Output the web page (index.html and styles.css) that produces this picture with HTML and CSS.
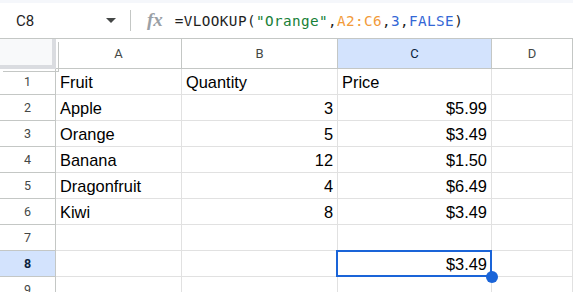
FILE: index.html
```html
<!DOCTYPE html>
<html lang="en">
<head>
    <meta charset="UTF-8">
    <title>Sheet</title>
    <link rel="stylesheet" href="styles.css">
</head>
<body>

<!-- Barra della formula -->
<div class="formula-bar">
    <div class="name-box">
        <span class="cell-ref">C8</span>
        <span class="caret"></span>
    </div>
    <div class="divider"></div>
    <span class="fx">fx</span>
    <div class="formula"><span class="tx">=VLOOKUP(</span><span class="str">"Orange"</span><span class="tx">,</span><span class="rng">A2:C6</span><span class="tx">,</span><span class="num">3</span><span class="tx">,</span><span class="kw">FALSE</span><span class="tx">)</span></div>
</div>

<!-- Griglia -->
<div class="grid">
    <div class="corner"></div>
    <div class="col-head">A</div>
    <div class="col-head">B</div>
    <div class="col-head active">C</div>
    <div class="col-head">D</div>

    <div class="row-head">1</div>
    <div class="cell">Fruit</div>
    <div class="cell">Quantity</div>
    <div class="cell">Price</div>
    <div class="cell"></div>

    <div class="row-head">2</div>
    <div class="cell">Apple</div>
    <div class="cell right">3</div>
    <div class="cell right">$5.99</div>
    <div class="cell"></div>

    <div class="row-head">3</div>
    <div class="cell">Orange</div>
    <div class="cell right">5</div>
    <div class="cell right">$3.49</div>
    <div class="cell"></div>

    <div class="row-head">4</div>
    <div class="cell">Banana</div>
    <div class="cell right">12</div>
    <div class="cell right">$1.50</div>
    <div class="cell"></div>

    <div class="row-head">5</div>
    <div class="cell">Dragonfruit</div>
    <div class="cell right">4</div>
    <div class="cell right">$6.49</div>
    <div class="cell"></div>

    <div class="row-head">6</div>
    <div class="cell">Kiwi</div>
    <div class="cell right">8</div>
    <div class="cell right">$3.49</div>
    <div class="cell"></div>

    <div class="row-head">7</div>
    <div class="cell"></div>
    <div class="cell"></div>
    <div class="cell"></div>
    <div class="cell"></div>

    <div class="row-head active">8</div>
    <div class="cell"></div>
    <div class="cell"></div>
    <div class="cell right selected">$3.49<span class="handle"></span></div>
    <div class="cell"></div>

    <div class="row-head">9</div>
    <div class="cell"></div>
    <div class="cell"></div>
    <div class="cell"></div>
    <div class="cell"></div>
</div>

</body>
</html>
```

FILE: styles.css
```css
    * {
        box-sizing: border-box;
    }
    body {
        margin: 0;
        background-color: #fff;
        font-family: "Liberation Sans", Arial, sans-serif;
        overflow: hidden;
        height: 292px;
    }
    .formula-bar {
        display: flex;
        align-items: center;
        height: 39px;
        border-top: 3px solid #f5f7fb;
        border-bottom: 1px solid #c4c7c5;
    }
    .name-box {
        display: flex;
        align-items: center;
        width: 124px;
        padding-left: 16px;
        padding-right: 6px;
    }
    .cell-ref {
        font-family: Roboto, sans-serif;
        font-size: 15px;
        color: #1f1f1f;
        flex: 1;
    }
    .caret {
        width: 0;
        height: 0;
        border-left: 5px solid transparent;
        border-right: 5px solid transparent;
        border-top: 5px solid #444746;
        margin-right: 2px;
    }
    .divider {
        width: 1px;
        height: 21px;
        background-color: #c4c7c5;
        margin-left: 6px;
    }
    .fx {
        font-family: "Liberation Serif", serif;
        font-style: italic;
        font-weight: bold;
        font-size: 19px;
        color: #9aa0a6;
        margin-left: 16px;
        margin-bottom: 2px;
    }
    .formula {
        font-family: "DejaVu Sans Mono", monospace;
        font-size: 14.3px;
        letter-spacing: 0.4px;
        margin-left: 12px;
        white-space: nowrap;
    }
    .tx { color: #1f1f1f; }
    .str { color: #188038; }
    .rng { color: #f29b3a; }
    .num { color: #3367d6; }
    .kw { color: #3367d6; }

    .grid {
        display: grid;
        grid-template-columns: 56px 126px 156px 154px 1fr;
        grid-template-rows: 30px repeat(9, 26px);
    }
    .corner {
        background-color: #f8f9fa;
        border-right: 4px solid #dadce0;
        border-bottom: 4px solid #dadce0;
        box-shadow: 2px 2px 0 #fff, 3px 3px 0 #c4c7c5;
    }
    .col-head {
        display: flex;
        align-items: center;
        justify-content: center;
        font-family: Roboto, sans-serif;
        font-size: 13px;
        color: #444746;
        border-right: 1px solid #c4c7c5;
        border-bottom: 1px solid #c4c7c5;
    }
    .row-head {
        display: flex;
        align-items: center;
        justify-content: center;
        font-family: Roboto, sans-serif;
        font-size: 12.5px;
        color: #444746;
        border-right: 1px solid #c4c7c5;
        border-bottom: 1px solid #c4c7c5;
    }
    .active {
        background-color: #d3e3fd;
        color: #0b1f3f;
    }
    .row-head.active {
        font-weight: bold;
    }
    .cell {
        position: relative;
        font-size: 16.4px;
        line-height: 25px;
        padding: 1px 4px 0 4px;
        color: #000;
        white-space: nowrap;
        border-right: 1px solid #e1e1e1;
        border-bottom: 1px solid #e1e1e1;
    }
    .right {
        text-align: right;
    }
    .selected::after {
        content: "";
        position: absolute;
        left: -2px;
        top: -1px;
        right: -1px;
        bottom: -1px;
        border: 2px solid #1a64d8;
    }
    .handle {
        position: absolute;
        left: 148px;
        top: 20px;
        width: 12px;
        height: 12px;
        border-radius: 50%;
        background-color: #1a64d8;
        z-index: 2;
    }
```
